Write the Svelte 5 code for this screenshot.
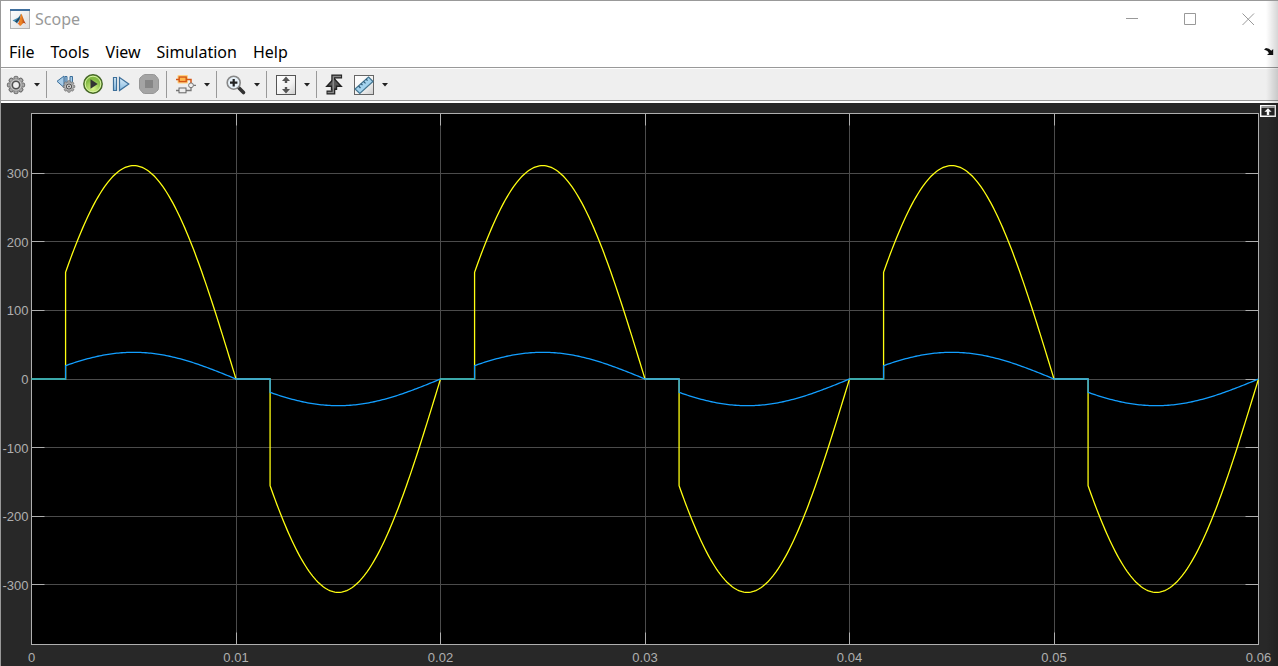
<script lang="ts">
  const menus = ['File', 'Tools', 'View', 'Simulation', 'Help'];
  const tools = [
    { id: 'settings', label: 'Configuration properties', menu: true, end: true },
    { id: 'back', label: 'Stepping options' },
    { id: 'run', label: 'Run' },
    { id: 'step', label: 'Step forward' },
    { id: 'stop', label: 'Stop', end: true },
    { id: 'highlight', label: 'Highlight block', menu: true, end: true },
    { id: 'zoom', label: 'Zoom', menu: true, end: true },
    { id: 'fit', label: 'Scale axes limits', menu: true, end: true },
    { id: 'trigger', label: 'Triggers' },
    { id: 'measure', label: 'Cursor measurements', menu: true }
  ];

  const xTicks = [0, 0.01, 0.02, 0.03, 0.04, 0.05, 0.06];
  const yTicks = [300, 200, 100, 0, -100, -200, -300];
  const tEnd = 0.06;
  const yMax = 387;
  const half = 0.01;
  const delay = half / 6;
  const teeth = [0, 45, 90, 135, 180, 225, 270, 315];

  let width = $state(1277);
  let height = $state(563);

  // half pixels keep the frame lines sharp
  let left = 30.5;
  let top = 10.5;
  let right = $derived(width - 19.5);
  let bottom = $derived(height - 21.5);

  function sx(t: number) {
    return left + (t / tEnd) * (right - left);
  }

  function sy(v: number) {
    return (top + bottom) / 2 - (v / yMax) * ((bottom - top) / 2);
  }

  // phase controlled sine: zero until the firing angle in every half cycle
  function wave(amp: number) {
    let d = `M${sx(0)} ${sy(0)}`;
    for (let k = 0; k < 6; k++) {
      const start = k * half + delay;
      d += `L${sx(start)} ${sy(0)}`;
      for (let i = 0; i <= 100; i++) {
        const t = start + ((half - delay) * i) / 100;
        d += `L${sx(t).toFixed(2)} ${sy(amp * Math.sin((Math.PI * t) / half)).toFixed(2)}`;
      }
    }
    return d;
  }

  let voltage = $derived(wave(311));
  let current = $derived(wave(38.9));
</script>

{#snippet gear(x: number, y: number, r: number)}
  <g transform="translate({x} {y}) scale({r / 8})">
    {#each teeth as a}
      <rect x="-2" y="-8.6" width="4" height="5" rx="1.2" fill="#aaa" stroke="#666" transform="rotate({a})" />
    {/each}
    <circle r="6.2" fill="#c4c4c4" stroke="#888" stroke-width=".8" />
    <circle r="3.7" fill="#efefef" stroke="#505050" stroke-width="1.6" />
  </g>
{/snippet}

<div class="window">
  <header class="title-bar">
    <svg class="app-icon" width="20" height="20" viewBox="0 0 20 20" aria-hidden="true">
      <defs>
        <linearGradient id="flame"><stop offset="0" stop-color="#e9531d" /><stop offset=".45" stop-color="#ef8a24" /><stop offset="1" stop-color="#9e2412" /></linearGradient>
        <linearGradient id="tile" x2="1" y2="1"><stop offset="0" stop-color="#fff" /><stop offset="1" stop-color="#ddd" /></linearGradient>
      </defs>
      <rect x=".5" y=".5" width="19" height="19" fill="url(#tile)" stroke="#b3b3b3" />
      <path d="M0 0h20v2H0z" fill="#3f6f9e" />
      <path d="M2.5 11.5 7 9.3c1.4-.5 2.5-2.2 4-4.5l-1 6-3 3.7c-1-1.5-2.6-2-4.5-3z" fill="#438cb5" />
      <path d="M5 12.5 9.5 8 11 5l-2 6-2.5 2.8z" fill="#24475f" />
      <path d="M7 15c2-.2 2.6-4 4-10.2 1.1-.3 2.5 6.5 5 10.3-1.4-1.3-2.5-1.6-3.5-.4-.9 1-1.5 2.2-2.7 2.3C9.600 15.800 8.800 14.600 7 15z" fill="url(#flame)" />
    </svg>
    <h1>Scope</h1>
    <div class="window-buttons">
      <button aria-label="Minimize"><svg width="14" height="14"><path d="M0 6.5h12" /></svg></button>
      <button aria-label="Maximize"><svg width="14" height="14"><path d="M.5 1.5h11v11H.5z" /></svg></button>
      <button aria-label="Close"><svg width="14" height="14"><path d="M.5 1.500l11.500 11.500M12 1.500l-11.500 11.500" /></svg></button>
    </div>
  </header>

  <nav class="menu-bar">
    {#each menus as menu}
      <button class="menu">{menu}</button>
    {/each}
    <button class="dock" aria-label="Dock window">
      <svg width="10" height="8" viewBox="0 0 10 8"><path d="M0 1.5 2 0l3 .8 2.3 2L9.2 1v6H3l2-1.8L3.400 3z" fill="#111" /></svg>
    </button>
  </nav>

  <div class="toolbar" role="toolbar">
    {#each tools as tool}
      <button class="tool" aria-label={tool.label}>
        <svg width="24" height="24" viewBox="0 0 24 24">
          {#if tool.id === 'settings'}
            {@render gear(12, 12, 8)}
          {:else if tool.id === 'back'}
            <path d="M10 3 3 8.300l7 6.200z" fill="#a7cce8" stroke="#3d6f9a" />
            <path d="M11 3.500h2v7h-2zM16 3.500h2.500v7H16z" fill="#a7cce8" stroke="#3d6f9a" />
            {@render gear(15, 13.5, 5.4)}
            <circle cx="15" cy="13.5" r="1" fill="#555" />
          {:else if tool.id === 'run'}
            <circle cx="11" cy="11" r="9.2" fill="url(#green)" stroke="#456528" stroke-width="1.4" />
            <circle cx="11" cy="11" r="7.8" fill="none" stroke="#d8f3a5" stroke-width="1" />
            <path d="M8.500 6.200 15.700 11l-7.200 4.800z" fill="#333" />
          {:else if tool.id === 'step'}
            <path d="M3.500 4.500h3v13h-3zM9.500 4.500 18.800 11 9.500 17.500z" fill="url(#sky)" stroke="#3d6f9a" stroke-width="1.2" />
          {:else if tool.id === 'stop'}
            <path d="M6.500 1.500h9q1.500 0 3 2t2 3v9q0 1.500-2 3t-3 2h-9q-1.500 0-3-2t-2-3v-9q0-1.500 2-3t3-2z" fill="#a4a4a4" stroke="#979797" />
            <rect x="7" y="7" width="8" height="8" fill="#868686" />
          {:else if tool.id === 'highlight'}
            <rect x="3.500" y="2" width="10.500" height="8.500" rx="1" fill="#ffd180" />
            <path d="M2 6.500h3M12 6.500h5v4.500" fill="none" stroke="#d45716" stroke-width="1.5" />
            <rect x="5.200" y="4" width="7" height="4.600" fill="#ffb74d" stroke="#d45716" stroke-width="1.4" />
            <path d="M2 17.500h3M12 17.500h5V14M19 12.300h3" fill="none" stroke="#777" stroke-width="1.3" />
            <rect x="5" y="15" width="7" height="4.800" fill="#eee" stroke="#666" />
            <circle cx="17" cy="12.300" r="2.400" fill="#eee" stroke="#777" />
          {:else if tool.id === 'zoom'}
            <path d="m14.500 14.500 5 5" stroke="#333" stroke-width="3.600" stroke-linecap="round" />
            <circle cx="9.700" cy="9.700" r="6.500" fill="#e7f1f8" stroke="#888" stroke-width="1.600" />
            <path d="M6 9.700h7.400M9.700 6v7.400" stroke="#222" stroke-width="2.200" />
          {:else if tool.id === 'fit'}
            <rect x="2.500" y="2.500" width="19" height="19" fill="url(#paper)" stroke="#555" />
            <path d="M12 3.500 8 8h2.800v2h2.400V8H16zM12 20.500l4-4.500h-2.800v-2h-2.400v2H8z" fill="#555" />
          {:else if tool.id === 'trigger'}
            <path d="M2.500 19.500h6.800v-16h8.800" fill="none" stroke="#222" stroke-width="4" />
            <path d="M10 5.500 2.800 13.300h4.700v3h5v-3h4.700z" fill="#555" stroke="#222" stroke-width="1.400" />
            <path d="M3.500 19.500h5.800v-16h7.800" fill="none" stroke="#888" stroke-width="1.500" />
          {:else}
            <rect x="2.500" y="2.500" width="19" height="19" fill="url(#paper)" stroke="#666" />
            <path d="M16.500 4 21 8.500 7.800 20.500 3 16z" fill="#a4d3ee" stroke="#447590" stroke-width="1.200" />
            <path d="m6.500 13 2 2m.5-4.400 1.500 1.600M11.500 8.300l2 2M14 6l1.500 1.600" stroke="#305b78" stroke-width="1.200" />
          {/if}
        </svg>
      </button>
      {#if tool.menu}
        <button class="arrow" aria-label="{tool.label} options"><svg width="6" height="4"><path d="M0 0h6L3 3.500z" fill="#222" /></svg></button>
      {/if}
      {#if tool.end}<span class="separator"></span>{/if}
    {/each}
    <svg class="defs" width="0" height="0" aria-hidden="true">
      <defs>
        <radialGradient id="green" cy=".75"><stop offset="0" stop-color="#d9f58b" /><stop offset="1" stop-color="#82b942" /></radialGradient>
        <linearGradient id="sky" x2="0" y2="1"><stop offset="0" stop-color="#dceefa" /><stop offset="1" stop-color="#85b9e0" /></linearGradient>
        <linearGradient id="paper" x2="1" y2="1"><stop offset="0" stop-color="#fff" /><stop offset=".6" stop-color="#f2f2f2" /><stop offset="1" stop-color="#ccc" /></linearGradient>
      </defs>
    </svg>
  </div>

  <main class="scope" bind:clientWidth={width} bind:clientHeight={height}>
    <svg class="plot" {width} {height} role="img" aria-label="Scope signals">
      <rect x={left} y={top} width={right - left} height={bottom - top} fill="#000" />
      {#each yTicks as v}
        {@const y = Math.floor(sy(v)) + 0.5}
        <path class="grid" d="M{left} {y}H{right}" />
        <path class="axis" d="M{left} {y}h13M{right} {y}h-13" />
      {/each}
      {#each xTicks as t}
        {@const x = Math.floor(sx(t)) + 0.5}
        <path class="grid" d="M{x} {top}V{bottom}" />
        <path class="axis" d="M{x} {top}v12M{x} {bottom}v-12" />
      {/each}
      <rect class="axis" x={left} y={top} width={right - left} height={bottom - top} />
      <path class="voltage" d={voltage} />
      <path class="current" d={current} />
      {#each [0, 0.02, 0.04] as t}
        <path class="rest" d="M{sx(t)} {sy(0)}H{sx(t + delay)}" />
      {/each}
      {#each yTicks as v}
        <text x={left - 3} y={sy(v) + 5} text-anchor="end">{v}</text>
      {/each}
      {#each xTicks as t}
        <text x={sx(t)} y={bottom + 17} text-anchor="middle">{t}</text>
      {/each}
    </svg>
    <button class="maximize-axes" aria-label="Maximize axes">
      <svg width="16" height="12" viewBox="0 0 16 12"><path d="M.700.700h14.600v10.600H.700z" fill="#252525" stroke="#fff" stroke-width="1.400" /><path d="M1 2.300h14" stroke="#bbb" /><path d="M8 3.200 4.400 6.800h2.400V10h2.400V6.800h2.400z" fill="#fff" /></svg>
    </button>
  </main>
  <div class="edge-shadow"></div>
</div>

<style>
  :global(body) { margin: 0; }
  .window { position: relative; display: flex; flex-direction: column; height: 100vh; box-sizing: border-box; border-top: 1px solid #999; border-left: 1px solid #999; background: #fff; overflow: hidden; font-family: "Noto Sans", "Open Sans", sans-serif; }
  button { display: flex; align-items: center; justify-content: center; padding: 0; border: none; background: none; font: inherit; color: inherit; }

  .title-bar { display: flex; align-items: center; height: 36px; padding-left: 9px; flex-shrink: 0; }
  .title-bar h1 { margin: 0 0 0 5px; font-size: 16px; font-weight: 400; line-height: 20px; color: #999; }
  .window-buttons { display: flex; margin-left: auto; align-self: stretch; }
  .window-buttons button { width: 58px; }
  .window-buttons path { fill: none; stroke: #999; }

  .menu-bar { display: flex; align-items: center; gap: 16px; height: 30px; padding: 0 4px 0 8px; border-bottom: 1px solid #999; flex-shrink: 0; font-size: 16px; line-height: 20px; color: #000; }
  .dock { margin-left: auto; }

  .toolbar { display: flex; align-items: center; height: 31px; margin-top: 1px; padding-left: 1px; background: #efefef; border-bottom: 1px solid #999; flex-shrink: 0; }
  .tool { width: 28px; height: 28px; }
  .arrow { width: 14px; height: 28px; }
  .separator { width: 1px; height: 27px; margin: 0 5px 0 2px; background: #999; }
  .defs { display: block; }

  .scope { position: relative; flex: 1; min-height: 0; margin-top: 2px; background: #282828; overflow: hidden; }
  .plot { display: block; }
  .plot text { font-family: "Liberation Sans", Arial, sans-serif; font-size: 13px; fill: #afafaf; }
  .grid { fill: none; stroke: #4b4b4b; }
  .axis { fill: none; stroke: #afafaf; }
  .voltage { fill: none; stroke: #ffff11; stroke-width: 1.3; }
  .current { fill: none; stroke: #139fff; stroke-width: 1.3; }
  .rest { fill: none; stroke: #3aa9a0; stroke-width: 1.3; }
  .maximize-axes { position: absolute; top: 2px; right: 2px; }

  .edge-shadow { position: absolute; top: 0; right: 0; bottom: 0; width: 12px; background: linear-gradient(to right, transparent, rgba(0, 0, 0, .16)); pointer-events: none; }
</style>
